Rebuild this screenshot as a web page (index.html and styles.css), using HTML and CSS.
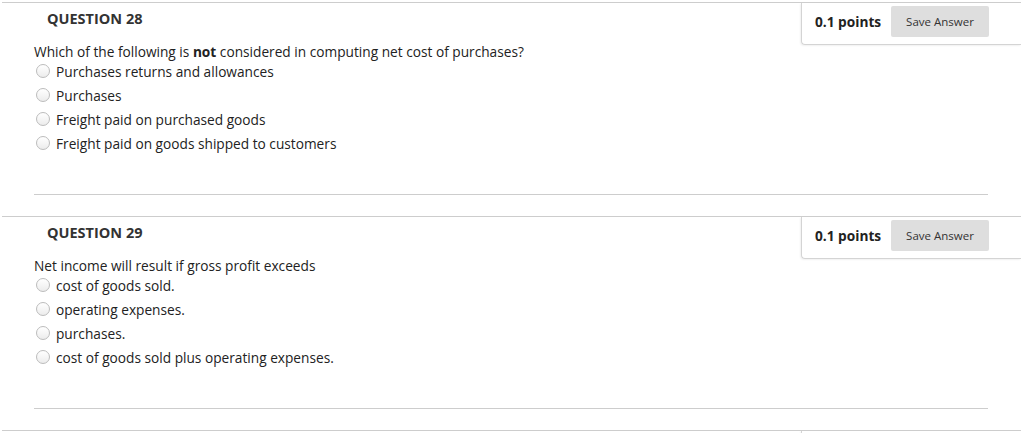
FILE: index.html
```html
<!DOCTYPE html>
<html>
<head>
<meta charset="utf-8">
<link rel="stylesheet" href="styles.css">
</head>
<body>
<div class="page">
  <section class="question">
    <div class="q-head">
      <h2 class="q-title">QUESTION 28</h2>
      <div class="points-box">
        <span class="points">0.1 points</span>
        <button class="save-btn">Save Answer</button>
      </div>
    </div>
    <div class="q-body">
      <p class="q-text">Which of the following is <b>not</b> considered in computing net cost of purchases?</p>
      <ul class="options">
        <li><span class="radio"></span>Purchases returns and allowances</li>
        <li><span class="radio"></span>Purchases</li>
        <li><span class="radio"></span>Freight paid on purchased goods</li>
        <li><span class="radio"></span>Freight paid on goods shipped to customers</li>
      </ul>
      <hr class="sep">
    </div>
  </section>
  <section class="question">
    <div class="q-head">
      <h2 class="q-title">QUESTION 29</h2>
      <div class="points-box">
        <span class="points">0.1 points</span>
        <button class="save-btn">Save Answer</button>
      </div>
    </div>
    <div class="q-body">
      <p class="q-text">Net income will result if gross profit exceeds</p>
      <ul class="options">
        <li><span class="radio"></span>cost of goods sold.</li>
        <li><span class="radio"></span>operating expenses.</li>
        <li><span class="radio"></span>purchases.</li>
        <li><span class="radio"></span>cost of goods sold plus operating expenses.</li>
      </ul>
      <hr class="sep">
    </div>
  </section>
  <section class="question question-next">
    <div class="q-head">
      <div class="points-box"></div>
    </div>
  </section>
</div>
</body>
</html>
```

FILE: styles.css
```css
html, body {
  margin: 0;
  padding: 0;
  background: #fff;
  overflow: hidden;
}
body {
  font-family: "Open Sans", "Liberation Sans", sans-serif;
  color: #222;
  padding-top: 2px;
}
.page {
  margin-left: 2px;
  width: 1019px;
}
.question {
  border-top: 1px solid #cdcdcd;
  height: 213px;
}
.question-next {
  height: 2px;
  overflow: hidden;
}
.q-head {
  display: flex;
  align-items: flex-start;
  height: 41px;
}
.q-title {
  margin: 0;
  padding: 6px 0 0 45px;
  font-size: 14.5px;
  line-height: 20px;
  font-weight: 700;
  color: #333;
}
.points-box {
  margin-left: auto;
  width: 174px;
  height: 38px;
  padding: 3px 32px 0 13px;
  display: flex;
  align-items: flex-start;
  border-left: 1px solid #d4d4d4;
  border-bottom: 1px solid #d4d4d4;
  border-bottom-left-radius: 4px;
  box-shadow: -1px 1px 2px rgba(0,0,0,0.06);
}
.points {
  font-size: 13.7px;
  font-weight: 700;
  line-height: 31px;
  color: #222;
}
.save-btn {
  margin-left: auto;
  width: 98px;
  height: 31px;
  border: none;
  border-radius: 2px;
  background: #dedede;
  color: #333;
  font-family: "Open Sans", "Liberation Sans", sans-serif;
  font-size: 11.5px;
  padding: 0;
}
.q-body {
  padding-left: 32px;
  padding-right: 33px;
}
.q-text {
  margin: 1px 0 0 0;
  font-size: 13.7px;
  line-height: 14px;
  color: #222;
}
.options {
  list-style: none;
  margin: 0;
  padding: 0;
}
.options li {
  display: flex;
  align-items: center;
  height: 24px;
  font-size: 13.7px;
  color: #222;
}
.radio {
  width: 14px;
  height: 14px;
  margin-left: 2px;
  margin-right: 6px;
  border: 1px solid #bcbcbc;
  border-radius: 50%;
  background: linear-gradient(#ffffff, #ececec);
  box-sizing: border-box;
  flex: none;
}
.sep {
  margin: 39px 0 0 0;
  border: none;
  border-top: 1px solid #cdcdcd;
  height: 0;
}
```
